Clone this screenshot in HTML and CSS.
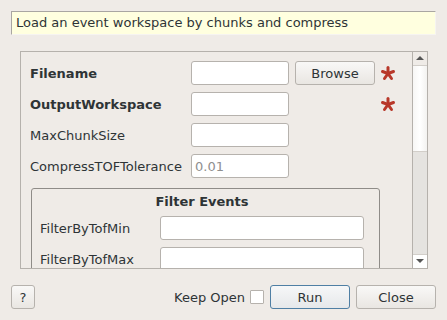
FILE: index.html
```html
<!DOCTYPE html>
<html lang="en">

<head>
    <meta charset="UTF-8">
    <meta name="viewport" content="width=device-width, initial-scale=1.0">
    <title>LoadEventAndCompress</title>
    <link rel="stylesheet" href="styles.css">
</head>

<body>
<div class="dialog">
    <div class="desc">Load an event workspace by chunks and compress</div>

    <div class="scroll">
        <div class="props">
            <div class="row">
                <label class="name bold">Filename</label>
                <input type="text" class="field">
                <button class="btn browse">Browse</button>
                <span class="req">
                    <svg width="16" height="16" viewBox="0 0 16 16">
                        <g stroke="#b8382a" stroke-width="3" stroke-linecap="round">
                            <line x1="8" y1="8.5" x2="8" y2="2.5"/>
                            <line x1="8" y1="8.5" x2="13.5" y2="6.5"/>
                            <line x1="8" y1="8.5" x2="11.5" y2="13.5"/>
                            <line x1="8" y1="8.5" x2="4.5" y2="13.5"/>
                            <line x1="8" y1="8.5" x2="2.5" y2="6.5"/>
                        </g>
                    </svg>
                </span>
            </div>
            <div class="row">
                <label class="name bold">OutputWorkspace</label>
                <input type="text" class="field">
                <span></span>
                <span class="req">
                    <svg width="16" height="16" viewBox="0 0 16 16">
                        <g stroke="#b8382a" stroke-width="3" stroke-linecap="round">
                            <line x1="8" y1="8.5" x2="8" y2="2.5"/>
                            <line x1="8" y1="8.5" x2="13.5" y2="6.5"/>
                            <line x1="8" y1="8.5" x2="11.5" y2="13.5"/>
                            <line x1="8" y1="8.5" x2="4.5" y2="13.5"/>
                            <line x1="8" y1="8.5" x2="2.5" y2="6.5"/>
                        </g>
                    </svg>
                </span>
            </div>
            <div class="row">
                <label class="name">MaxChunkSize</label>
                <input type="text" class="field">
            </div>
            <div class="row">
                <label class="name">CompressTOFTolerance</label>
                <input type="text" class="field" placeholder="0.01">
            </div>

            <fieldset class="group">
                <div class="group-title">Filter Events</div>
                <div class="grow">
                    <label class="name">FilterByTofMin</label>
                    <input type="text" class="field wide">
                </div>
                <div class="grow">
                    <label class="name">FilterByTofMax</label>
                    <input type="text" class="field wide">
                </div>
            </fieldset>
        </div>

        <div class="vbar">
            <div class="arrow up"></div>
            <div class="handle"></div>
            <div class="trough"></div>
            <div class="arrow down"></div>
        </div>
    </div>

    <div class="bottom">
        <button class="btn help">?</button>
        <span class="spacer"></span>
        <label class="keep">Keep Open <input type="checkbox" class="check"></label>
        <button class="btn run">Run</button>
        <button class="btn">Close</button>
    </div>
</div>
</body>

</html>
```

FILE: styles.css
```css
* {
    padding: 0;
    margin: 0;
    box-sizing: border-box;
}

body {
    background-color: #efebe7;
    font: 13px "DejaVu Sans", sans-serif;
    color: #2e3436;
}

.dialog {
    width: 447px;
    height: 320px;
    padding: 11px 11px 0 11px;
    display: flex;
    flex-direction: column;
}

.desc {
    height: 24px;
    line-height: 22px;
    padding-left: 4px;
    background-color: #ffffdf;
    border: 1px solid #f6f4f1;
    border-top-color: #a9a6a2;
    border-left-color: #a9a6a2;
}

.scroll {
    margin: 16px 8px 0 9px;
    height: 218px;
    border: 1px solid #b5b1ac;
    display: flex;
    overflow: hidden;
}

.props {
    flex: 1;
    padding: 9px 0 0 9px;
    overflow: hidden;
}

.row {
    display: grid;
    grid-template-columns: 161px 98px 86px 24px;
    align-items: center;
    height: 24px;
    margin-bottom: 7px;
}

.name {
    white-space: nowrap;
}

.bold {
    font-weight: bold;
}

.field {
    height: 24px;
    border: 1px solid #b6b2ad;
    border-radius: 3px;
    background: #fff;
    font: 13px "DejaVu Sans", sans-serif;
    padding: 0 3px;
    outline: none;
}

.field::placeholder {
    color: #8f8f8f;
}

.req {
    display: flex;
    justify-content: center;
    padding-left: 2px;
}

.btn {
    height: 24px;
    width: 80px;
    border: 1px solid #b6b2ad;
    border-radius: 3px;
    background: linear-gradient(#f9f8f7, #e9e6e2);
    font: 13px "DejaVu Sans", sans-serif;
    color: #2e3436;
}

.browse {
    margin-left: 6px;
}

.group {
    margin: 10px 0 0 1px;
    width: 349px;
    border: 1px solid #8f8c88;
    border-radius: 3px;
    padding: 4px 15px 0 8px;
}

.group-title {
    text-align: center;
    font-weight: bold;
    height: 20px;
    line-height: 18px;
    margin-bottom: 3px;
}

.grow {
    display: grid;
    grid-template-columns: 120px 1fr;
    align-items: center;
    height: 24px;
    margin-bottom: 7px;
}

.vbar {
    width: 15px;
    border-left: 1px solid #b5b1ac;
    display: flex;
    flex-direction: column;
    background: #efebe7;
}

.arrow {
    height: 14px;
    position: relative;
    background: #efebe7;
}

.arrow::after {
    content: "";
    position: absolute;
    left: 3px;
    border-left: 4px solid transparent;
    border-right: 4px solid transparent;
}

.up {
    border-bottom: 1px solid #d2cec9;
}

.up::after {
    top: 4px;
    border-bottom: 4px solid #555;
}

.down {
    border-top: 1px solid #d2cec9;
    background: #fff;
}

.down::after {
    top: 4px;
    border-top: 4px solid #555;
}

.handle {
    height: 86px;
    background: linear-gradient(90deg, #f7f6f5, #fff 50%, #f3f2f0);
    border-bottom: 1px solid #d2cec9;
}

.trough {
    flex: 1;
    background: #e5e3e0;
}

.bottom {
    margin-top: 16px;
    display: flex;
    align-items: center;
    gap: 6px;
}

.help {
    width: 24px;
}

.spacer {
    flex: 1;
}

.keep {
    display: flex;
    align-items: center;
    gap: 5px;
}

.check {
    appearance: none;
    width: 14px;
    height: 14px;
    border: 1px solid #b6b2ad;
    background: #fff;
    border-radius: 1px;
}

.run {
    border-color: #4f7fa4;
    background: linear-gradient(#f6f7f8, #e6e8ea);
}
```
